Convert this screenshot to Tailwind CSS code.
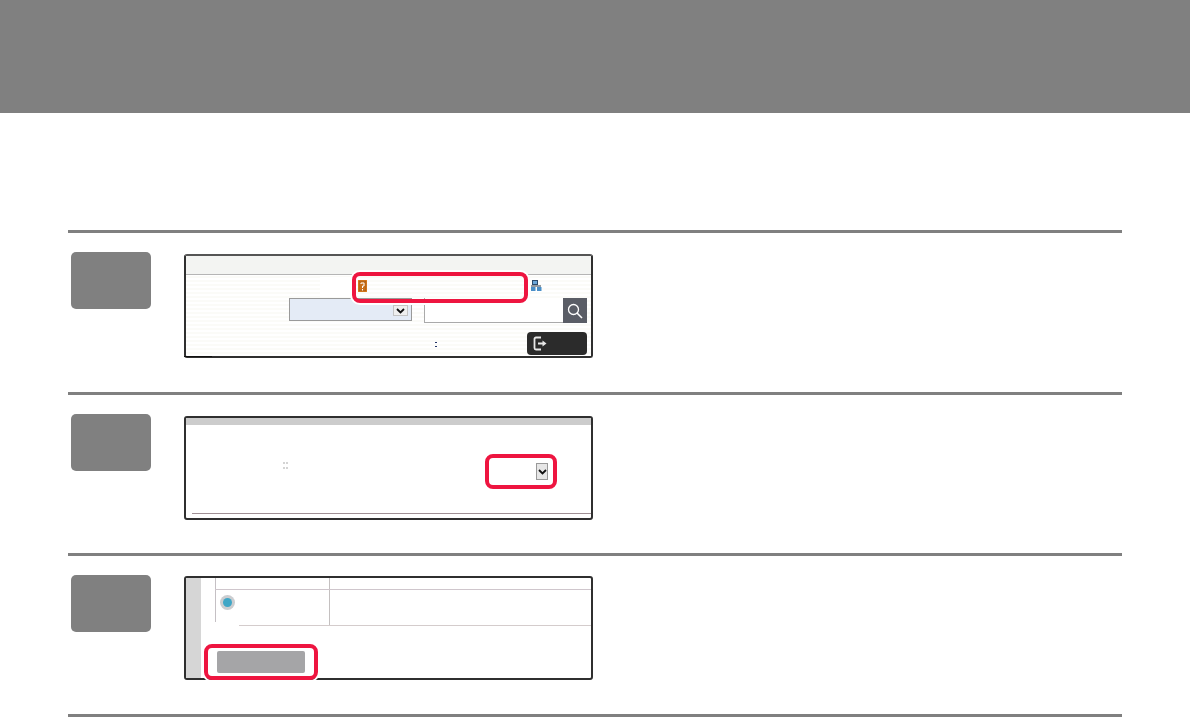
<!DOCTYPE html>
<html lang="en">
<head>
    <meta charset="UTF-8">
    <title>Steps</title>
    <script src="https://cdn.jsdelivr.net/npm/@tailwindcss/browser@4"></script>
</head>
<body class="bg-white h-[717px] overflow-hidden font-['Liberation_Sans',sans-serif]">
    <!-- Header band -->
    <div class="h-[113px] bg-[#808080]"></div>

    <div class="mx-[68px] mt-[117px] w-[1054px]">
        <!-- Step 1 -->
        <div class="h-[162px] border-t-[3px] border-[#808080] flex">
            <div class="w-[80px] h-[57px] ml-[3px] mt-[19px] bg-[#808080] rounded-[5px]"></div>
            <div class="relative w-[409px] h-[104px] ml-[33px] mt-[21px] border-2 border-[#2f2f2f] border-t-[#555555] rounded-[3px] bg-[repeating-linear-gradient(0deg,#ffffff_0px,#ffffff_2px,#fbfbf8_2px,#fbfbf8_4px)]">
                <div class="h-[19px] bg-[#f3f4f2] border-b border-[#b5b5b5]"></div>
                <div class="h-[23px] flex items-start">
                    <div class="w-[35px] h-[20px] ml-[134px] mt-[2px] bg-white"></div>
                    <svg class="ml-[3px] mt-[5px]" width="9" height="12" viewBox="0 0 9 12">
                        <rect width="9" height="12" fill="#e8851f"/>
                        <rect x="1" y="1" width="7" height="10" fill="#c9701a" stroke="#8a4a10" stroke-width="0.5"/>
                        <path d="M3 4V3h3v3H4.500v2M4.500 9v1.500" fill="none" stroke="#fff" stroke-width="1"/>
                    </svg>
                    <svg class="ml-[164px] mt-[5px]" width="11" height="11" viewBox="0 0 11 11">
                        <rect x="1.500" y="0.500" width="5" height="4" fill="#6aa6d8" stroke="#2b4a6b"/>
                        <rect x="0" y="5.500" width="10" height="1" fill="#2b3a4a"/>
                        <rect x="0" y="7" width="4.500" height="4" fill="#4a8fc8"/>
                        <rect x="6" y="7" width="4.500" height="4" fill="#4a8fc8"/>
                    </svg>
                </div>
                <div class="h-[25px] flex items-start">
                    <div class="w-[123px] h-[23px] ml-[103px] bg-[#e4ebf6] border border-[#9a9a9a] flex justify-end pt-[6px] pr-[3px]">
                        <div class="w-[15px] h-[11px] bg-[#efefef] border border-[#c4c4c4] flex items-center justify-center">
                            <svg width="9" height="6" viewBox="0 0 9 6"><path d="M1 1l3.500 3.500L8 1" fill="none" stroke="#111" stroke-width="1.800"/></svg>
                        </div>
                    </div>
                    <div class="w-[139px] h-[25px] ml-[12px] bg-white border-l border-b border-[#aaa]"></div>
                    <div class="w-[24px] h-[25px] bg-[#5a5d66] flex items-center justify-center">
                        <svg width="18" height="18" viewBox="0 0 18 18"><circle cx="7.500" cy="7.500" r="5" fill="none" stroke="#fff" stroke-width="1.300"/><path d="M11 11l5 5" stroke="#fff" stroke-width="1.600"/></svg>
                    </div>
                </div>
                <div class="flex items-start">
                    <div class="w-[2px] h-[5px] ml-[249px] mt-[19px] border-y border-[#223366]"></div>
                    <div class="w-[60px] h-[23px] ml-[90px] mt-[9px] bg-[#2b2b2b] rounded-[4px] pl-[6px] pt-[4px]">
                        <svg width="15" height="15" viewBox="0 0 15 15"><path d="M8 1.500H3a1.500 1.500 0 0 0-1.500 1.500v9A1.500 1.500 0 0 0 3 13.500h5" fill="none" stroke="#e8e8e8" stroke-width="1.800"/><path d="M5 7.500h5" stroke="#e8e8e8" stroke-width="2"/><path d="M9.500 4.500l4 3-4 3z" fill="#e8e8e8"/></svg>
                    </div>
                </div>
                <div class="absolute left-[-2px] bottom-[-1px] w-[28px] h-[1px] bg-[#111]"></div>
                <!-- Highlight -->
                <div class="absolute left-[166px] top-[16px] w-[176px] h-[31px] border-4 border-[#ee1540] rounded-[8px] shadow-[0_0_0_2px_#ffffff]"></div>
            </div>
        </div>

        <!-- Step 2 -->
        <div class="h-[161px] border-t-[3px] border-[#808080] flex">
            <div class="w-[80px] h-[57px] ml-[3px] mt-[19px] bg-[#808080] rounded-[5px]"></div>
            <div class="relative w-[409px] h-[104px] ml-[33px] mt-[21px] border-2 border-[#2f2f2f] rounded-[3px] bg-white">
                <div class="h-[7px] bg-[#cccccc]"></div>
                <div class="h-[89px] ml-[6px] border-b border-[#a09095] flex items-start">
                    <div class="w-[3px] h-[7px] ml-[91px] mt-[37px] border-y-2 border-dotted border-[#d4d4d4]"></div>
                    <div class="w-[12px] h-[17px] ml-[250px] mt-[38px] bg-[#e6e6e6] border border-[#999] flex items-center justify-center">
                        <svg width="9" height="6" viewBox="0 0 9 6"><path d="M1 1l3.500 3.500L8 1" fill="none" stroke="#111" stroke-width="1.800"/></svg>
                    </div>
                </div>
                <!-- Highlight -->
                <div class="absolute left-[299px] top-[36px] w-[72px] h-[35px] border-4 border-[#ee1540] rounded-[8px] shadow-[0_0_0_2px_#ffffff]"></div>
            </div>
        </div>

        <!-- Step 3 -->
        <div class="h-[164px] border-y-[3px] border-[#808080] flex">
            <div class="w-[80px] h-[57px] ml-[3px] mt-[19px] bg-[#808080] rounded-[5px]"></div>
            <div class="relative w-[409px] h-[104px] ml-[33px] mt-[20px] border-2 border-[#2f2f2f] rounded-[3px] bg-white flex">
                <div class="w-[15px] h-full bg-[#d6d6d6] shrink-0"></div>
                <div class="flex-1 pl-[14px]">
                    <div class="h-[12px] flex border-b border-[#cfc6cc]">
                        <div class="w-[114px] border-l border-[#c5c0c4]"></div>
                        <div class="flex-1 border-l border-[#c4c0c0]"></div>
                    </div>
                    <div class="h-[35px] flex">
                        <div class="w-[114px] h-[32px] border-l border-[#c5c0c4] pl-[4px] pt-[5px]">
                            <div class="w-[15px] h-[15px] rounded-full bg-[#cbcdd0] blur-[0.5px] flex items-center justify-center">
                                <div class="w-[9px] h-[9px] rounded-full bg-[#3fa6c6]"></div>
                            </div>
                        </div>
                        <div class="flex-1 border-l border-[#c4c0c0]"></div>
                    </div>
                    <div class="h-[1px] ml-[24px] bg-[#d4cccc]"></div>
                    <div class="w-[88px] h-[22px] mt-[25px] ml-[2px] bg-[#a5a5a7] rounded-[2px]"></div>
                </div>
                <!-- Highlight -->
                <div class="absolute left-[18px] top-[66px] w-[114px] h-[36px] border-4 border-[#ee1540] rounded-[8px] shadow-[0_0_0_2px_#ffffff]"></div>
            </div>
        </div>
    </div>
</body>
</html>
